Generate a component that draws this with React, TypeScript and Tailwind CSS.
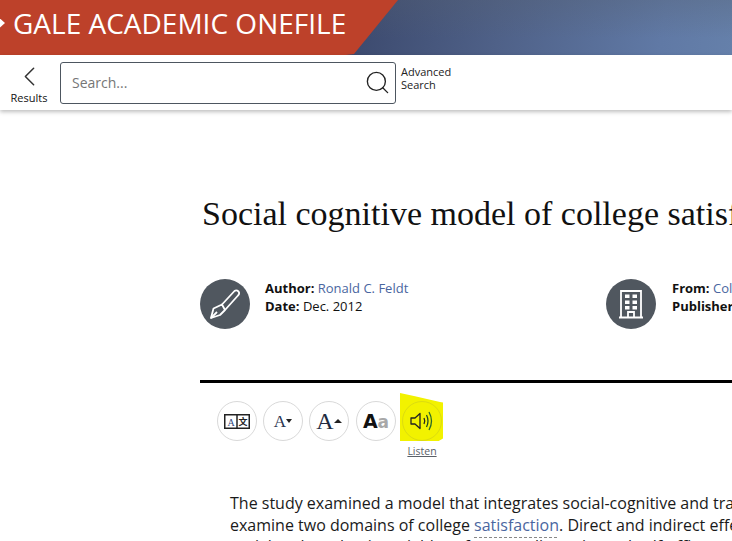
import React from 'react';
import { ChevronLeft, Search } from 'lucide-react';

function CircleButton({ children, className }: { children: React.ReactNode; className?: string }) {
    return (
        <button className={`w-10 h-10 rounded-full border border-[#d9d9d9] bg-white flex items-center justify-center shrink-0 ${className ?? ''}`}>
            {children}
        </button>
    );
}

export default function App() {
    return (
        <div className="w-[732px] h-[541px] overflow-hidden bg-white relative font-['Open_Sans',sans-serif]">
            {/* Banner */}
            <div className="h-[55px] bg-[linear-gradient(180deg,rgba(85,95,110,0.3),transparent_70%),linear-gradient(100deg,#39466a_45%,#4f6188_68%,#6079a5_90%,#6580aa_100%)] relative overflow-hidden">
                <div className="absolute left-0 top-0 h-[55px] w-[398px] bg-[#bd412a] [clip-path:polygon(0_0,100%_0,354px_98%,346px_100%,0_100%)] flex items-center pb-[9px]">
                    <div className="w-[5px] h-[9px] bg-white [clip-path:polygon(0_0,100%_50%,0_100%)] mr-[8px]"></div>
                    <span className="text-[28px] text-white leading-none whitespace-nowrap">GALE ACADEMIC ONEFILE</span>
                </div>
            </div>

            {/* Search bar */}
            <div className="h-[55px] flex items-center shadow-[0_2px_4px_rgba(0,0,0,0.25)] bg-white relative">
                <div className="w-[60px] flex flex-col items-center pt-[1px] pr-[2px]">
                    <ChevronLeft size={33} strokeWidth={1.1} className="text-[#333] -my-[1.5px]" />
                    <span className="text-[11px] leading-[14px] text-[#111]">Results</span>
                </div>
                <div className="w-[336px] h-[42px] border border-[#4d5660] rounded-[3px] flex items-center justify-between pl-[11px] pr-[4px]">
                    <span className="text-[14px] text-[#767676]">Search...</span>
                    <Search size={27} strokeWidth={1.2} className="text-[#222]" />
                </div>
                <div className="ml-[5px] -mt-[10px] text-[11px] leading-[13px] text-[#222]">
                    <div>Advanced</div>
                    <div>Search</div>
                </div>
            </div>

            {/* Article */}
            <div className="pl-[200px] w-[900px]">
                <h1 className="mt-[84px] ml-[2px] text-[34px] leading-[40px] text-[#111] whitespace-nowrap font-['Georgia','Liberation_Serif',serif]">
                    Social cognitive model of college satisfaction
                </h1>
                <div className="mt-[45px] flex">
                    <div className="w-[406px] flex items-start">
                        <div className="w-[50px] h-[50px] rounded-full bg-[#50575f] flex items-center justify-center shrink-0">
                            <svg width="30" height="30" viewBox="0 0 30 30" fill="none" stroke="white" strokeWidth="1.8" strokeLinejoin="round">
                                <path d="M1 29 L3.500 19.500 L12 15.500 L15 21 L10 26 Z" />
                                <path d="M1 29 L7 23" />
                                <path d="M12 15.500 L24.500 2 Q26.500 0.500 28.500 2.500 Q30 4.500 28 6.500 L15 21" />
                            </svg>
                        </div>
                        <div className="ml-[15px] text-[13px] leading-[18px] text-[#111]">
                            <div><b>Author:</b> <span className="text-[#4a66a0]">Ronald C. Feldt</span></div>
                            <div><b>Date:</b> Dec. 2012</div>
                        </div>
                    </div>
                    <div className="flex items-start">
                        <div className="w-[50px] h-[50px] rounded-full bg-[#50575f] flex items-center justify-center shrink-0">
                            <svg width="30" height="32" viewBox="0 0 30 32" fill="none">
                                <path d="M3 29.500 H27 M5 29.500 V3 H25 V29.500" stroke="white" strokeWidth="1.800" />
                                <path d="M12 29 V24 H18 V29" stroke="white" strokeWidth="1.800" />
                                <path d="M9 6.500h4.500v3.500H9zM16.500 6.500h4.500v3.500h-4.500zM9 12.500h4.500v3.500H9zM16.500 12.500h4.500v3.500h-4.500zM9 18h4.500v3.500H9zM16.500 18h4.500v3.500h-4.500z" fill="white" />
                            </svg>
                        </div>
                        <div className="ml-[16px] text-[13px] leading-[18px] text-[#111] whitespace-nowrap">
                            <div><b>From:</b> <span className="text-[#4a66a0]">College Student Journal</span></div>
                            <div><b>Publisher:</b> Project Innovation, Inc.</div>
                        </div>
                    </div>
                </div>

                <div className="mt-[51px] w-[532px] h-[3px] bg-black"></div>

                {/* Toolbar */}
                <div className="mt-[18px] ml-[17px] flex gap-[6px] items-start">
                    <CircleButton>
                        <svg width="26" height="15" viewBox="0 0 26 15">
                            <rect x="0.750" y="0.750" width="24.500" height="13.500" fill="none" stroke="#222" strokeWidth="1.500" />
                            <path d="M13 0v15" stroke="#222" strokeWidth="1.500" />
                            <text x="7" y="11.500" textAnchor="middle" fontSize="10" fontFamily="Liberation Serif, serif" fill="#2f4a80">A</text>
                            <text x="19" y="11" textAnchor="middle" fontSize="9" fontFamily="Noto Sans CJK SC, sans-serif" fontWeight="700" fill="#222">文</text>
                        </svg>
                    </CircleButton>
                    <CircleButton>
                        <span className="flex items-center">
                            <span className="text-[17px] leading-none font-['Liberation_Serif',serif] text-[#2a3550]">A</span>
                            <span className="w-0 h-0 border-l-[3px] border-r-[3px] border-t-[4px] border-l-transparent border-r-transparent border-t-[#222]"></span>
                        </span>
                    </CircleButton>
                    <CircleButton>
                        <span className="flex items-center">
                            <span className="text-[24px] leading-none font-['Liberation_Serif',serif] text-[#222a40]">A</span>
                            <span className="w-0 h-0 border-l-[4px] border-r-[4px] border-b-[4px] border-l-transparent border-r-transparent border-b-[#222]"></span>
                        </span>
                    </CircleButton>
                    <CircleButton className="ml-[1px]">
                        <span className="flex items-baseline font-['DejaVu_Sans',sans-serif] font-bold leading-none">
                            <span className="text-[19px] text-[#111]">A</span>
                            <span className="text-[17px] text-[#a8a8a8]">a</span>
                        </span>
                    </CircleButton>
                    <div className="relative w-10 h-10 shrink-0">
                        <div className="absolute left-[-2px] top-[-8px] w-[43px] h-[48px] bg-[#f2f200] [clip-path:polygon(0_0,35%_7%,93%_19%,100%_20%,100%_95%,90%_100%,0_100%)]"></div>
                        <div className="absolute inset-0 rounded-full border border-[#dcdc10] flex items-center justify-center">
                            <svg width="24" height="22" viewBox="0 0 24 22" fill="none" strokeWidth="1.300">
                                <path d="M1 8 H5 L10 3.500 V18.500 L5 14 H1 Z" stroke="#222" strokeLinejoin="round" />
                                <path d="M14 8 Q15.500 11 14 14" stroke="#222" />
                                <path d="M16.500 5 Q19.500 11 16.500 17" stroke="#224a22" />
                                <path d="M19 2 Q24 11 19 20" stroke="#2a6a2a" />
                            </svg>
                        </div>
                        <span className="absolute top-[43px] left-0 w-10 text-center text-[10.5px] leading-[14px] text-[#5a6068] underline">Listen</span>
                    </div>
                </div>

                {/* Body text */}
                <div className="mt-[51px] ml-[30px] text-[16px] leading-[22px] text-[#1a1a1a] whitespace-nowrap">
                    <p>The study examined a model that integrates social-cognitive and trait perspectives to</p>
                    <p>examine two domains of college <span className="text-[#4a66a0]">satisfaction</span>. Direct and indirect effects of</p>
                    <p className="-mt-[1px]">social and academic variables of <span className="relative">personality<span className="absolute left-0 right-0 top-[2px] border-t border-dashed border-[#888]"></span></span> traits and self-efficacy</p>
                </div>
            </div>
        </div>
    );
}
